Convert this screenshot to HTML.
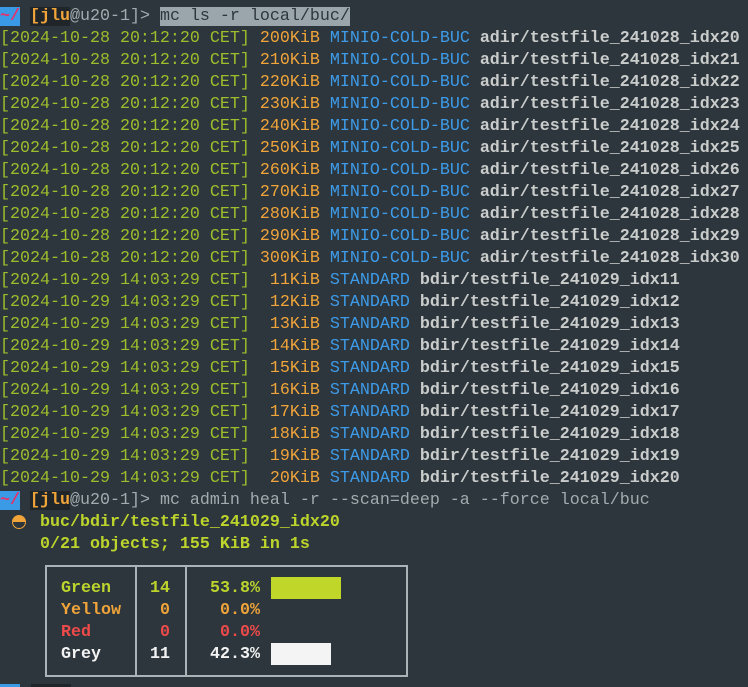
<!DOCTYPE html>
<html><head><meta charset="utf-8"><style>
html,body{margin:0;padding:0;background:#2d363c;width:748px;height:687px;overflow:hidden}
pre{position:absolute;left:0;top:6px;margin:0;font-family:"Liberation Mono","DejaVu Sans Mono",monospace;font-size:16.67px;line-height:22px;color:#b8bfc2;white-space:pre}
.t{color:#9ebd2c}.s{color:#f0a43a}.b{color:#3d9be9}.f{color:#c9cccb;font-weight:bold}
.p1{background:#3a9ae6;color:#e8306a;font-weight:bold}
.p2{background:#1f2528;color:#f0a43a;font-weight:bold}
.g{color:#a2abb0}
.cmd{background:#9ba6ac;color:#2d363c}
.l{color:#bcd42c;font-weight:bold}
#tbl{position:absolute;left:45px;top:565px;width:359px;height:108px;border:2px solid #a9b3b8}
.v{position:absolute;top:0;bottom:0;width:2px;background:#a9b3b8}
.r{position:absolute;font-family:"Liberation Mono",monospace;font-size:16.67px;font-weight:bold;line-height:22px;white-space:pre}
.icon{position:absolute;left:12px;top:515px;width:12px;height:12px;border-radius:50%;border:1.5px solid #f0a43a;background:linear-gradient(#f0a43a 50%,transparent 50%)}
</style></head><body>
<pre><span class="p1">~/</span> <span class="p2">[jlu</span><span class="g">@u20-1]&gt;</span> <span class="cmd">mc ls -r local/buc/</span>
<span class="t">[2024-10-28 20:12:20 CET]</span> <span class="s">200KiB</span> <span class="b">MINIO-COLD-BUC</span> <span class="f">adir/testfile_241028_idx20</span>
<span class="t">[2024-10-28 20:12:20 CET]</span> <span class="s">210KiB</span> <span class="b">MINIO-COLD-BUC</span> <span class="f">adir/testfile_241028_idx21</span>
<span class="t">[2024-10-28 20:12:20 CET]</span> <span class="s">220KiB</span> <span class="b">MINIO-COLD-BUC</span> <span class="f">adir/testfile_241028_idx22</span>
<span class="t">[2024-10-28 20:12:20 CET]</span> <span class="s">230KiB</span> <span class="b">MINIO-COLD-BUC</span> <span class="f">adir/testfile_241028_idx23</span>
<span class="t">[2024-10-28 20:12:20 CET]</span> <span class="s">240KiB</span> <span class="b">MINIO-COLD-BUC</span> <span class="f">adir/testfile_241028_idx24</span>
<span class="t">[2024-10-28 20:12:20 CET]</span> <span class="s">250KiB</span> <span class="b">MINIO-COLD-BUC</span> <span class="f">adir/testfile_241028_idx25</span>
<span class="t">[2024-10-28 20:12:20 CET]</span> <span class="s">260KiB</span> <span class="b">MINIO-COLD-BUC</span> <span class="f">adir/testfile_241028_idx26</span>
<span class="t">[2024-10-28 20:12:20 CET]</span> <span class="s">270KiB</span> <span class="b">MINIO-COLD-BUC</span> <span class="f">adir/testfile_241028_idx27</span>
<span class="t">[2024-10-28 20:12:20 CET]</span> <span class="s">280KiB</span> <span class="b">MINIO-COLD-BUC</span> <span class="f">adir/testfile_241028_idx28</span>
<span class="t">[2024-10-28 20:12:20 CET]</span> <span class="s">290KiB</span> <span class="b">MINIO-COLD-BUC</span> <span class="f">adir/testfile_241028_idx29</span>
<span class="t">[2024-10-28 20:12:20 CET]</span> <span class="s">300KiB</span> <span class="b">MINIO-COLD-BUC</span> <span class="f">adir/testfile_241028_idx30</span>
<span class="t">[2024-10-29 14:03:29 CET]</span> <span class="s"> 11KiB</span> <span class="b">STANDARD</span> <span class="f">bdir/testfile_241029_idx11</span>
<span class="t">[2024-10-29 14:03:29 CET]</span> <span class="s"> 12KiB</span> <span class="b">STANDARD</span> <span class="f">bdir/testfile_241029_idx12</span>
<span class="t">[2024-10-29 14:03:29 CET]</span> <span class="s"> 13KiB</span> <span class="b">STANDARD</span> <span class="f">bdir/testfile_241029_idx13</span>
<span class="t">[2024-10-29 14:03:29 CET]</span> <span class="s"> 14KiB</span> <span class="b">STANDARD</span> <span class="f">bdir/testfile_241029_idx14</span>
<span class="t">[2024-10-29 14:03:29 CET]</span> <span class="s"> 15KiB</span> <span class="b">STANDARD</span> <span class="f">bdir/testfile_241029_idx15</span>
<span class="t">[2024-10-29 14:03:29 CET]</span> <span class="s"> 16KiB</span> <span class="b">STANDARD</span> <span class="f">bdir/testfile_241029_idx16</span>
<span class="t">[2024-10-29 14:03:29 CET]</span> <span class="s"> 17KiB</span> <span class="b">STANDARD</span> <span class="f">bdir/testfile_241029_idx17</span>
<span class="t">[2024-10-29 14:03:29 CET]</span> <span class="s"> 18KiB</span> <span class="b">STANDARD</span> <span class="f">bdir/testfile_241029_idx18</span>
<span class="t">[2024-10-29 14:03:29 CET]</span> <span class="s"> 19KiB</span> <span class="b">STANDARD</span> <span class="f">bdir/testfile_241029_idx19</span>
<span class="t">[2024-10-29 14:03:29 CET]</span> <span class="s"> 20KiB</span> <span class="b">STANDARD</span> <span class="f">bdir/testfile_241029_idx20</span>
<span class="p1">~/</span> <span class="p2">[jlu</span><span class="g">@u20-1]&gt; mc admin heal -r --scan=deep -a --force local/buc</span>
    <span class="l">buc/bdir/testfile_241029_idx20</span>
    <span class="l">0/21 objects; 155 KiB in 1s</span>
</pre>
<div class="icon"></div>
<div id="tbl">
<div class="v" style="left:88px"></div><div class="v" style="left:138px"></div>
<div class="r" style="left:14px;top:11px;color:#bcd42c">Green</div>
<div class="r" style="left:103px;top:11px;color:#bcd42c">14</div>
<div class="r" style="left:163px;top:11px;color:#bcd42c">53.8%</div>
<div style="position:absolute;left:224px;top:10px;width:70px;height:22px;background:#c0d72a"></div>
<div class="r" style="left:14px;top:33px;color:#f0a43a">Yellow</div>
<div class="r" style="left:113px;top:33px;color:#f0a43a">0</div>
<div class="r" style="left:173px;top:33px;color:#f0a43a">0.0%</div>
<div class="r" style="left:14px;top:55px;color:#ef4a4a">Red</div>
<div class="r" style="left:113px;top:55px;color:#ef4a4a">0</div>
<div class="r" style="left:173px;top:55px;color:#ef4a4a">0.0%</div>
<div class="r" style="left:14px;top:77px;color:#f3f3f3">Grey</div>
<div class="r" style="left:103px;top:77px;color:#f3f3f3">11</div>
<div class="r" style="left:163px;top:77px;color:#f3f3f3">42.3%</div>
<div style="position:absolute;left:224px;top:76px;width:60px;height:22px;background:#f4f4f4"></div>
</div>
<div style="position:absolute;left:0;top:684px;width:20px;height:3px;background:#3a9ae6"></div>
<div style="position:absolute;left:31px;top:684px;width:40px;height:3px;background:#1f2528"></div>
</body></html>
